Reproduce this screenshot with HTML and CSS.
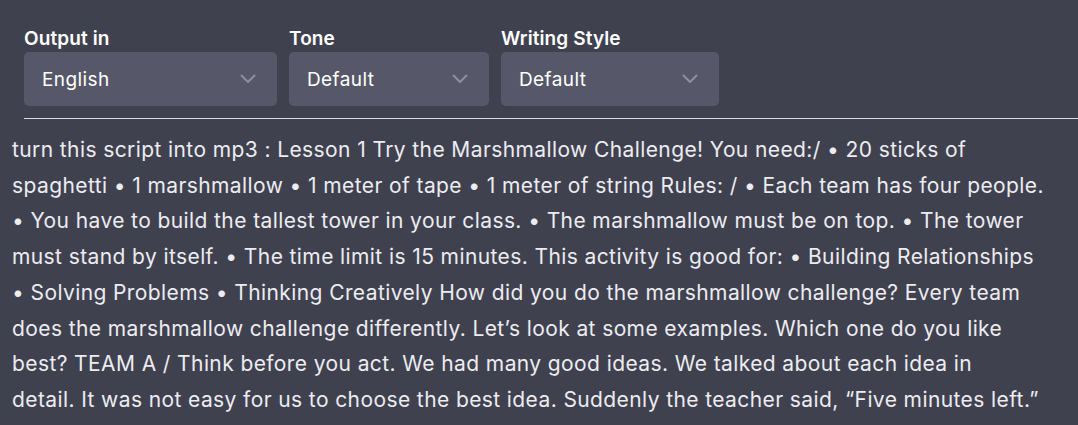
FILE: index.html
```html
<!DOCTYPE html>
<html>
<head>
<meta charset="utf-8">
<link rel="stylesheet" href="styles.css">
</head>
<body>
<div class="page">
  <div class="controls">
    <div class="field">
      <label class="label">Output in</label>
      <div class="select w1"><span>English</span><svg class="chev" viewBox="0 0 16 10" width="16" height="10"><polyline points="1.5,1.5 8,8 14.5,1.5" fill="none" stroke="currentColor" stroke-width="2" stroke-linecap="round" stroke-linejoin="round"/></svg></div>
    </div>
    <div class="field">
      <label class="label">Tone</label>
      <div class="select w2"><span>Default</span><svg class="chev" viewBox="0 0 16 10" width="16" height="10"><polyline points="1.5,1.5 8,8 14.5,1.5" fill="none" stroke="currentColor" stroke-width="2" stroke-linecap="round" stroke-linejoin="round"/></svg></div>
    </div>
    <div class="field">
      <label class="label">Writing Style</label>
      <div class="select w3"><span>Default</span><svg class="chev" viewBox="0 0 16 10" width="16" height="10"><polyline points="1.5,1.5 8,8 14.5,1.5" fill="none" stroke="currentColor" stroke-width="2" stroke-linecap="round" stroke-linejoin="round"/></svg></div>
    </div>
  </div>
  <div class="divider"></div>
  <div class="prompt">turn this script into mp3 : Lesson 1 Try the Marshmallow Challenge! You need:/ • 20 sticks of<br>spaghetti • 1 marshmallow • 1 meter of tape • 1 meter of string Rules: / • Each team has four people.<br>• You have to build the tallest tower in your class. • The marshmallow must be on top. • The tower<br>must stand by itself. • The time limit is 15 minutes. This activity is good for: • Building Relationships<br>• Solving Problems • Thinking Creatively How did you do the marshmallow challenge? Every team<br>does the marshmallow challenge differently. Let’s look at some examples. Which one do you like<br>best? TEAM A / Think before you act. We had many good ideas. We talked about each idea in<br>detail. It was not easy for us to choose the best idea. Suddenly the teacher said, “Five minutes left.”</div>
</div>
</body>
</html>
```

FILE: styles.css
```css
html, body {
  margin: 0;
  padding: 0;
  background: #40414f;
  overflow: hidden;
}
body {
  font-family: Inter, "Noto Sans", sans-serif;
  color: #ececf1;
}
.page {
  width: 1078px;
  height: 425px;
}
.controls {
  display: flex;
  gap: 12px;
  padding: 27px 0 0 24px;
}
.field {
  display: flex;
  flex-direction: column;
}
.label {
  font-size: 19px;
  font-weight: 600;
  line-height: 24px;
  margin-bottom: 1px;
  color: #ffffff;
  letter-spacing: 0.1px;
}
.select {
  height: 54px;
  box-sizing: border-box;
  background: #565869;
  border-radius: 5px;
  display: flex;
  align-items: center;
  justify-content: space-between;
  padding: 0 21px 0 18px;
  font-size: 19px;
  letter-spacing: 0.4px;
  color: #ffffff;
}
.w1 { width: 253px; }
.w2 { width: 200px; }
.w3 { width: 218px; }
.chev {
  color: #8e8ea0;
}
.divider {
  margin: 12px 0 0 24px;
  height: 1px;
  background: #d9d9e3;
}
.prompt {
  padding: 13px 4px 0 12px;
  font-size: 21px;
  line-height: 35.7px;
  color: #ececf1;
  letter-spacing: 0.4px;
  white-space: normal;
}
```
